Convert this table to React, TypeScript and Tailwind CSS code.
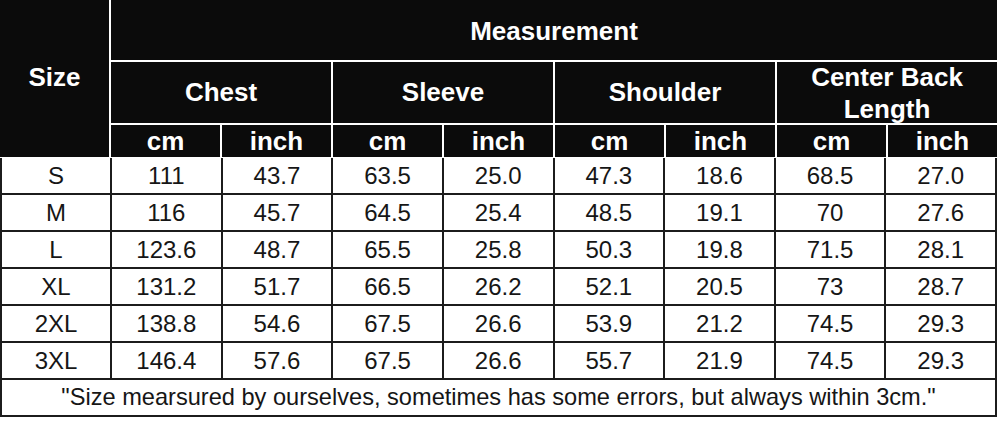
const groups = ["Chest", "Sleeve", "Shoulder"];

const rows: string[][] = [
  ["S", "111", "43.7", "63.5", "25.0", "47.3", "18.6", "68.5", "27.0"],
  ["M", "116", "45.7", "64.5", "25.4", "48.5", "19.1", "70", "27.6"],
  ["L", "123.6", "48.7", "65.5", "25.8", "50.3", "19.8", "71.5", "28.1"],
  ["XL", "131.2", "51.7", "66.5", "26.2", "52.1", "20.5", "73", "28.7"],
  ["2XL", "138.8", "54.6", "67.5", "26.6", "53.9", "21.2", "74.5", "29.3"],
  ["3XL", "146.4", "57.6", "67.5", "26.6", "55.7", "21.9", "74.5", "29.3"],
];

const head = "bg-[#0b0b0b] text-white font-bold flex items-center justify-center text-center text-[26px]";

export default function App() {
  return (
    <div className="w-[1000px] h-[421px] bg-white" style={{ fontFamily: '"Liberation Sans", Arial, sans-serif' }}>
      <div className="w-[997px]">
        <div className="grid grid-cols-[109px_repeat(8,1fr)] grid-rows-[60px_61px_32px] gap-x-[2px] gap-y-[2px] bg-white">
          <div className={`${head} row-span-3 pb-[2px]`}>Size</div>
          <div className={`${head} col-span-8 pt-[2px]`}>Measurement</div>
          {groups.map((g) => (
            <div key={g} className={`${head} col-span-2`}>
              {g}
            </div>
          ))}
          <div className={`${head} col-span-2 leading-[32px]`}>
            Center Back
            <br />
            Length
          </div>
          {[...groups, "Center"].map((g) => [
            <div key={g + "cm"} className={head}>cm</div>,
            <div key={g + "in"} className={head}>inch</div>,
          ])}
        </div>
        <div className="mt-[1px] grid grid-cols-[108px_repeat(8,1fr)] auto-rows-[35px] gap-[2px] bg-[#1c1c1c] border-x-2 border-b-2 border-[#1c1c1c]">
          {rows.map((r) =>
            r.map((v, i) => (
              <div key={r[0] + i} className="bg-white flex items-center justify-center text-[24px] text-[#161616]">
                {v}
              </div>
            ))
          )}
          <div className="col-span-9 bg-white flex items-center justify-center text-[23.6px] text-[#161616]">
            "Size mearsured by ourselves, sometimes has some errors, but always within 3cm."
          </div>
        </div>
      </div>
    </div>
  );
}
